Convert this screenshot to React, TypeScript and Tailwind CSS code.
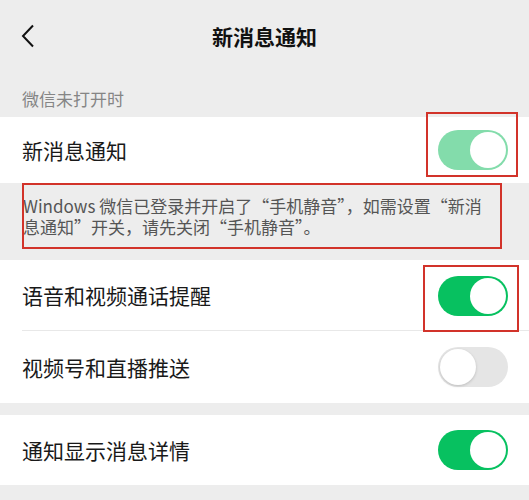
import React from 'react'

function Toggle({ on, dim }: { on: boolean; dim?: boolean }) {
  if (!on) {
    return (
      <div className="w-[70px] h-[40px] rounded-full bg-[#e5e5e5] p-[2px] flex items-center">
        <div className="w-[36px] h-[36px] rounded-full bg-white shadow-[0_1px_3px_rgba(0,0,0,0.18)]" />
      </div>
    )
  }
  return (
    <div
      className={`w-[70px] h-[40px] rounded-full p-[2px] flex items-center justify-end ${
        dim ? 'bg-[#83dcab]' : 'bg-[#07c160]'
      }`}
    >
      <div className="w-[36px] h-[36px] rounded-full bg-white" />
    </div>
  )
}

function Row({ label, children, h, divider }: { label: string; children: React.ReactNode; h: string; divider?: boolean }) {
  return (
    <div className={`relative bg-white flex items-center justify-between pl-[22px] pr-[21px] ${h}`}>
      <span className="text-[21px] text-[#191919] leading-none">{label}</span>
      {children}
      {divider && <div className="absolute left-[22px] right-0 bottom-0 h-px bg-[#e8e8e8]" />}
    </div>
  )
}

export default function App() {
  return (
    <div className="relative w-[529px] min-h-[500px] bg-[#ededed] overflow-hidden font-['Noto_Sans_CJK_SC','Noto_Sans',sans-serif]">
      {/* Header */}
      <div className="relative h-[74px] flex items-center justify-center">
        <svg className="absolute left-[21px] top-[24px] w-[14px] h-[24px]" viewBox="0 0 14 24" fill="none" stroke="#111" strokeWidth={2}>
          <polyline points="12,1.5 2,12 12,22.5" />
        </svg>
        <h1 className="text-[21px] font-semibold text-[#111]">新消息通知</h1>
      </div>

      {/* Section label */}
      <div className="h-[43px] flex items-end pb-[8px] px-[22px]">
        <span className="text-[17px] leading-[20px] text-[#858585]">微信未打开时</span>
      </div>

      <Row label="新消息通知" h="h-[66px]">
        <Toggle on dim />
      </Row>

      {/* Notice */}
      <div className="h-[77px] pt-[12px] px-[23px] text-[17px] leading-[21px] text-[#555]">
        Windows 微信已登录并开启了“手机静音”，如需设置“新消
        <br />
        息通知”开关，请先关闭“手机静音”。
      </div>

      <Row label="语音和视频通话提醒" h="h-[71px]" divider>
        <Toggle on />
      </Row>
      <Row label="视频号和直播推送" h="h-[72px]">
        <Toggle on={false} />
      </Row>

      <div className="h-[12px]" />

      <Row label="通知显示消息详情" h="h-[70px]">
        <Toggle on />
      </Row>

      {/* Annotation boxes */}
      <div className="absolute left-[426px] top-[112px] w-[92px] h-[65px] border-2 border-[#d2332a]" />
      <div className="absolute left-[22px] top-[183px] w-[480px] h-[66px] border-2 border-[#d2332a]" />
      <div className="absolute left-[423px] top-[265px] w-[96px] h-[67px] border-2 border-[#d2332a]" />
    </div>
  )
}
